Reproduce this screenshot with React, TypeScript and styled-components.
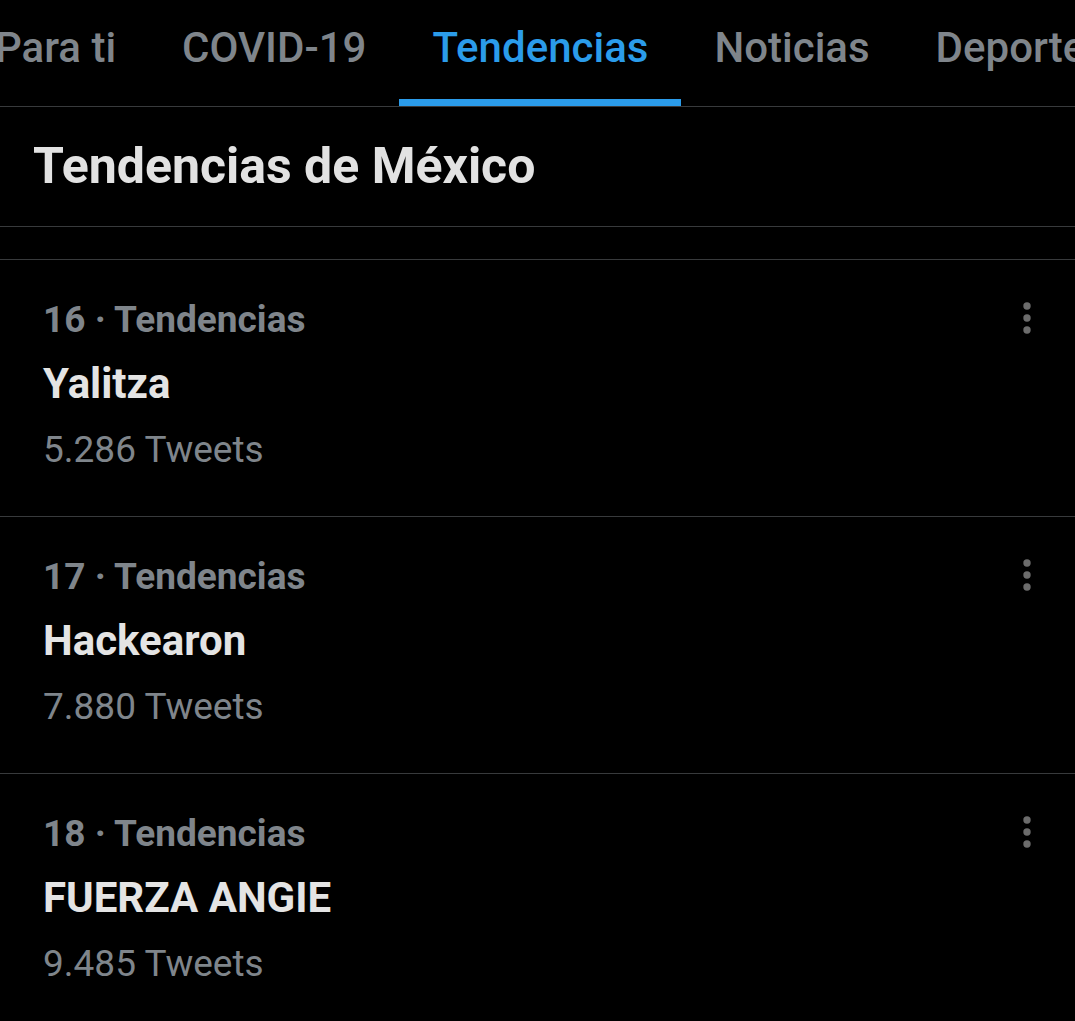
import { FC } from "react";
import styled, { createGlobalStyle } from "styled-components";

const TABS = ["Para ti", "COVID-19", "Tendencias", "Noticias", "Deportes", "Entretenimiento"];

const TRENDS = [
  { rank: 16, name: "Yalitza", count: "5.286" },
  { rank: 17, name: "Hackearon", count: "7.880" },
  { rank: 18, name: "FUERZA ANGIE", count: "9.485" },
];

const GlobalStyle = createGlobalStyle`
  html, body {
    margin: 0;
    padding: 0;
    background: #000;
  }
  body {
    font-family: Roboto, "Liberation Sans", sans-serif;
    color: #e1e1e1;
    overflow: hidden;
  }
`;

const Page = styled("div")`
  width: 1075px;
  height: 1021px;
  background: #000;
  overflow: hidden;
`;

const TabBar = styled("nav")`
  height: 107px;
  box-sizing: border-box;
  border-bottom: 1px solid #383a3c;
  overflow: hidden;
`;

const TabRow = styled("div")`
  display: flex;
  margin-left: -38px;
  white-space: nowrap;
`;

const Tab = styled("div")<{ $active?: boolean }>`
  box-sizing: border-box;
  height: 106px;
  padding: 23px 33px 0;
  font-size: 42px;
  line-height: 49px;
  font-weight: 500;
  color: ${(p) => (p.$active ? "#2b9cea" : "#7f858b")};
  border-bottom: 7px solid ${(p) => (p.$active ? "#2b9cea" : "transparent")};
  flex-shrink: 0;
`;

const Heading = styled("h1")`
  margin: 0;
  padding: 0 33px;
  height: 119px;
  line-height: 119px;
  font-size: 50px;
  font-weight: 700;
  color: #e2e2e2;
  border-bottom: 1px solid #383a3c;
`;

const Spacer = styled("div")`
  height: 32px;
  border-bottom: 1px solid #383a3c;
`;

const TrendRow = styled("div")`
  display: flex;
  justify-content: space-between;
  align-items: flex-start;
  padding: 28px 36px 36px 43px;
  border-bottom: 1px solid #383a3c;
`;

const TrendText = styled("div")`
  display: flex;
  flex-direction: column;
`;

const Meta = styled("div")`
  font-size: 37px;
  line-height: 64px;
  font-weight: 700;
  color: #7f858b;
`;

const Title = styled("div")`
  font-size: 42px;
  line-height: 64px;
  font-weight: 700;
  color: #e4e4e4;
`;

const Count = styled("div")`
  font-size: 37px;
  line-height: 64px;
  padding-top: 2px;
  margin-bottom: -2px;
  font-weight: 400;
  color: #7f858b;
`;

const MenuButton = styled("div")`
  margin-top: 10px;
  width: 24px;
  height: 40px;
`;

const MoreIcon: FC = () => (
  <svg width="24" height="40" viewBox="0 0 24 40">
    <circle cx="12" cy="8" r="3.7" fill="#6c6c6c" />
    <circle cx="12" cy="20" r="3.7" fill="#6c6c6c" />
    <circle cx="12" cy="32" r="3.7" fill="#6c6c6c" />
  </svg>
);

export default function App() {
  return (
    <Page>
      <GlobalStyle />
      <TabBar>
        <TabRow>
          {TABS.map((tab) => (
            <Tab key={tab} $active={tab === "Tendencias"}>
              {tab}
            </Tab>
          ))}
        </TabRow>
      </TabBar>
      <Heading>Tendencias de México</Heading>
      <Spacer />
      {TRENDS.map((trend) => (
        <TrendRow key={trend.rank}>
          <TrendText>
            <Meta>{trend.rank} · Tendencias</Meta>
            <Title>{trend.name}</Title>
            <Count>{trend.count} Tweets</Count>
          </TrendText>
          <MenuButton>
            <MoreIcon />
          </MenuButton>
        </TrendRow>
      ))}
    </Page>
  );
}
